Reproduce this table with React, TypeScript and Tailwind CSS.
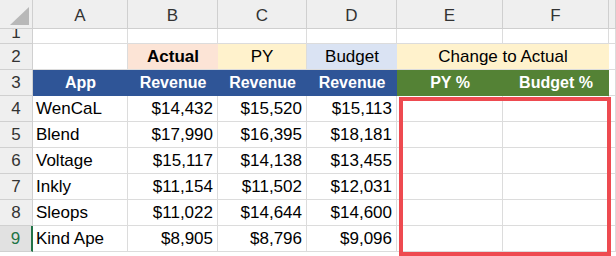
import React from "react";

const rows = [
  { n: 4, app: "WenCaL", actual: "$14,432", py: "$15,520", budget: "$15,113" },
  { n: 5, app: "Blend", actual: "$17,990", py: "$16,395", budget: "$18,181" },
  { n: 6, app: "Voltage", actual: "$15,117", py: "$14,138", budget: "$13,455" },
  { n: 7, app: "Inkly", actual: "$11,154", py: "$11,502", budget: "$12,031" },
  { n: 8, app: "Sleops", actual: "$11,022", py: "$14,644", budget: "$14,600" },
  { n: 9, app: "Kind Ape", actual: "$8,905", py: "$8,796", budget: "$9,096" },
];

const cell = "border-r border-b border-[#dcdcdc] flex items-center";
const rowHead =
  "border-r border-b border-[#d0d0d0] bg-[#efefef] text-[#333] flex items-center justify-center";
const colHead =
  "border-r border-b border-[#cfcfcf] bg-[#efefef] text-[#333] flex items-center justify-center pt-1";

export default function App() {
  return (
    <div
      className="relative w-[616px] h-[256px] overflow-hidden bg-white text-[17px] text-black"
      style={{ fontFamily: '"Liberation Sans", Arial, sans-serif' }}
    >
      <div className="grid grid-cols-[33px_95px_90px_89px_90px_106px_106px_1fr] grid-rows-[29px_15px_26px_26px_repeat(7,26px)]">
        {/* column headers */}
        <div className="relative border-r border-b border-[#cfcfcf] bg-[#efefef]">
          <div className="absolute right-[3px] bottom-[3px] w-0 h-0 border-l-[19px] border-l-transparent border-b-[18px] border-b-[#b8b8b8]" />
        </div>
        {["A", "B", "C", "D", "E", "F", ""].map((c, i) => (
          <div key={i} className={colHead}>
            {c}
          </div>
        ))}

        {/* row 1 (scrolled, partly hidden) */}
        <div className={`${rowHead} overflow-hidden items-end`}>
          <div className="h-[26px] leading-[26px] -mb-[3px] shrink-0">1</div>
        </div>
        {Array.from({ length: 7 }).map((_, i) => (
          <div key={i} className={cell} />
        ))}

        {/* row 2 */}
        <div className={rowHead}>2</div>
        <div className={cell} />
        <div className="bg-[#fce4d6] flex items-center justify-center font-bold border-b border-[#dcdcdc]">
          Actual
        </div>
        <div className="bg-[#fff2cc] flex items-center justify-center border-r border-b border-[#dcdcdc]">
          PY
        </div>
        <div className="bg-[#dae3f3] flex items-center justify-center border-b border-[#dcdcdc]">
          Budget
        </div>
        <div className="col-span-2 bg-[#fff2cc] flex items-center justify-center border-b border-[#dcdcdc]">
          Change to Actual
        </div>
        <div className={cell} />

        {/* row 3 */}
        <div className={rowHead}>3</div>
        {["App", "Revenue", "Revenue", "Revenue"].map((t, i) => (
          <div
            key={i}
            className="bg-[#2f5597] text-white font-bold text-[16px] flex items-center justify-center"
          >
            {t}
          </div>
        ))}
        {["PY %", "Budget %"].map((t, i) => (
          <div
            key={i}
            className="bg-[#548235] text-white font-bold text-[16px] flex items-center justify-center"
          >
            {t}
          </div>
        ))}
        <div className={cell} />

        {/* data rows */}
        {rows.map((r) => (
          <React.Fragment key={r.n}>
            <div
              className={
                r.n === 9
                  ? "border-b border-[#d0d0d0] border-r-2 border-r-[#217346] bg-[#e1e1e1] text-[#217346] flex items-center justify-center"
                  : rowHead
              }
            >
              {r.n}
            </div>
            <div className={`${cell} pl-[3px]`}>{r.app}</div>
            <div className={`${cell} justify-end pr-[4px]`}>{r.actual}</div>
            <div className={`${cell} justify-end pr-[4px]`}>{r.py}</div>
            <div className={`${cell} justify-end pr-[4px]`}>{r.budget}</div>
            <div className={cell} />
            <div className={cell} />
            <div className={cell} />
          </React.Fragment>
        ))}
      </div>

      {/* highlight box over E4:F9 */}
      <div className="absolute left-[399px] top-[97px] w-[212px] h-[159px] border-4 border-[#ee4a50]" />
    </div>
  );
}
